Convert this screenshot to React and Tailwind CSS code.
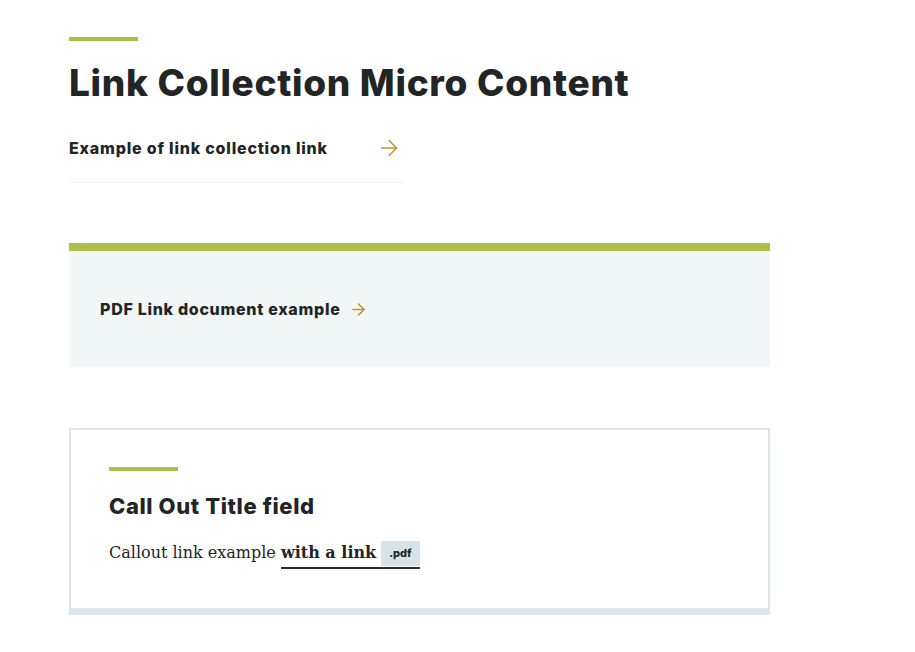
import { ArrowRight } from 'lucide-react'

const sans = "font-['Inter','Noto_Sans',sans-serif]"
const serif = "font-['DejaVu_Serif','Liberation_Serif',serif]"

function Rule({ className = '' }) {
  return <div className={`h-1 w-[69px] bg-[#acbf48] ${className}`} />
}

export default function App() {
  return (
    <div className={`min-h-screen bg-white pl-[69px] pt-[37px] text-[#222526] ${sans}`}>
      <div className="w-[701px]">
        {/* Heading */}
        <Rule />
        <h1 className="mt-[20px] text-[37px] font-extrabold leading-[44px] tracking-[0.7px]">
          Link Collection Micro Content
        </h1>

        {/* Link collection */}
        <a
          href="#"
          className="mt-[20px] flex w-[335px] items-center justify-between border-b border-[#eef2f3] pb-[24px] pt-[13px] pr-[2px]"
        >
          <span className="text-[16px] font-extrabold leading-[20px] tracking-[0.8px]">
            Example of link collection link
          </span>
          <ArrowRight className="h-[26px] w-[26px] -my-[3px] text-[#c9922c]" strokeWidth={1.3} />
        </a>

        {/* PDF panel */}
        <div className="mt-[60px] border-t-8 border-[#acbf48] bg-[#f1f6f6] px-[31px] py-[48px]">
          <a href="#" className="flex items-center gap-[9px] text-[16px] font-extrabold leading-[20px] tracking-[0.7px]">
            PDF Link document example
            <ArrowRight className="-my-[2px] h-[19px] w-[19px] text-[#c9922c]" strokeWidth={2} />
          </a>
        </div>

        {/* Callout */}
        <div className="mt-[61px] border-2 border-b-[7px] border-[#dae6eb] px-[38px] pb-[39px] pt-[37px]">
          <Rule />
          <h2 className="mt-[21px] text-[22px] font-extrabold leading-[28px] tracking-[0.6px]">
            Call Out Title field
          </h2>
          <p className={`mt-[19px] text-[16px] leading-[28px] ${serif}`}>
            Callout link example{' '}
            <a href="#" className="inline-flex items-center gap-[5px] border-b-2 border-[#2a2c2e] font-bold">
              with a link
              <span className={`bg-[#d6e4ea] px-[8px] py-[3px] text-[11px] font-extrabold leading-[19px] ${sans}`}>
                .pdf
              </span>
            </a>
          </p>
        </div>
      </div>
    </div>
  )
}
